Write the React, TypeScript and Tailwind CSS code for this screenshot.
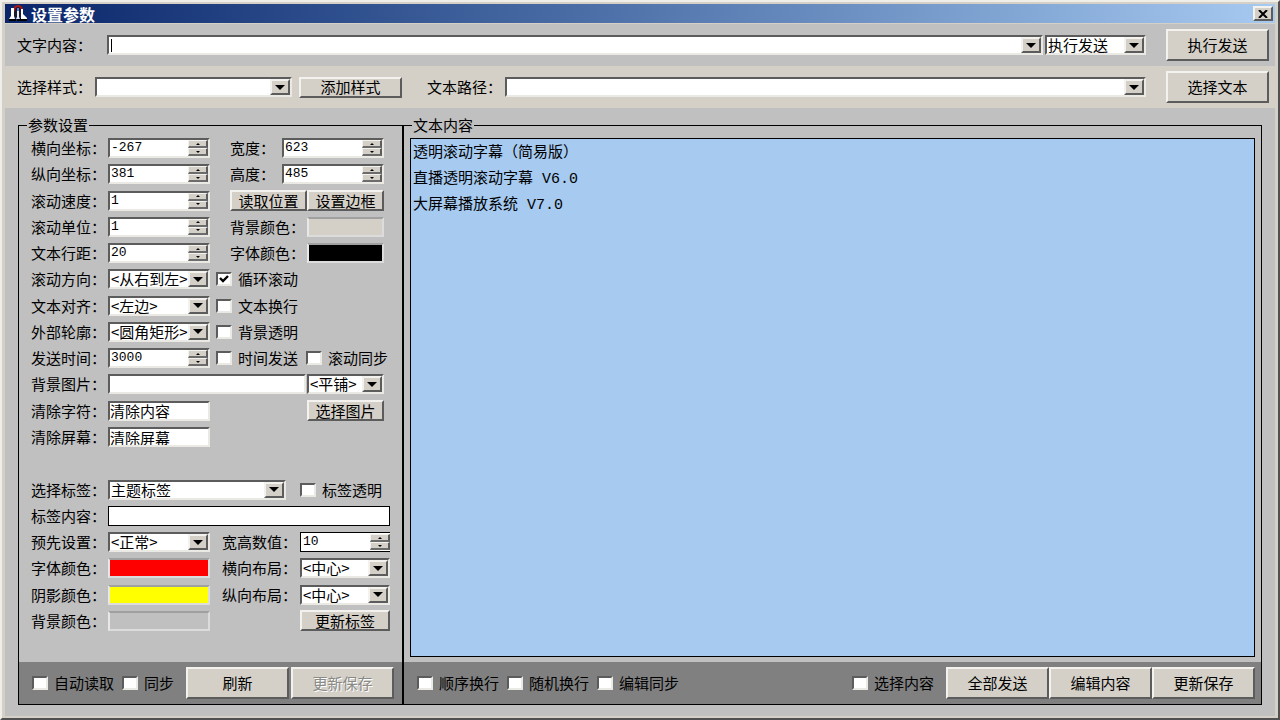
import React from "react";

const raised =
  "bg-[#d4d0c8] border-t-2 border-l-2 border-r-2 border-b-2 border-t-[#f4f2ee] border-l-[#f4f2ee] border-r-[#5c5c5c] border-b-[#5c5c5c]";
const sunken =
  "bg-white border-t-2 border-l-2 border-r-2 border-b-2 border-t-[#5c5c5c] border-l-[#5c5c5c] border-r-[#ebe9e4] border-b-[#ebe9e4]";

function Button({ children, className = "", disabled = false }: { children: React.ReactNode; className?: string; disabled?: boolean }) {
  return (
    <button
      type="button"
      disabled={disabled}
      className={`${raised} flex shrink-0 items-center justify-center whitespace-nowrap text-black disabled:text-[#8a8a86] disabled:[text-shadow:1px_1px_0_#fff] ${className}`}
    >
      {children}
    </button>
  );
}

function DownArrow() {
  return (
    <svg viewBox="0 0 10 5" className="h-[5px] w-[10px]" aria-hidden="true">
      <path d="M0 0H10L5 5Z" fill="#000" />
    </svg>
  );
}

function Select({ id, label, options, className = "" }: { id: string; label?: string; options: string[]; className?: string }) {
  return (
    <span className={`${sunken} grid h-5 grid-cols-[minmax(0,1fr)_20px] overflow-hidden ${className}`}>
      <select
        id={id}
        aria-label={label}
        className="col-span-2 col-start-1 row-start-1 h-4 w-full appearance-none overflow-hidden bg-white pl-px pr-5 leading-4 outline-none"
      >
        {options.map((o) => (
          <option key={o}>{o}</option>
        ))}
      </select>
      <span className={`${raised} pointer-events-none col-start-2 row-start-1 flex h-4 items-center justify-center`}>
        <DownArrow />
      </span>
    </span>
  );
}

function StepButton({ up = false }: { up?: boolean }) {
  return (
    <button
      type="button"
      aria-label={up ? "增加" : "减少"}
      className="flex h-2 w-full items-center justify-center border-b-2 border-l border-r-2 border-t border-b-[#6c6c6c] border-l-[#f4f2ee] border-r-[#5c5c5c] border-t-[#f4f2ee] bg-[#d4d0c8]"
    >
      <svg viewBox="0 0 4 2" className="h-0.5 w-1" aria-hidden="true">
        <path d={up ? "M0 2H4L2 0Z" : "M0 0H4L2 2Z"} fill="#000" />
      </svg>
    </button>
  );
}

function Spinner({ id, value, className = "", flat = false }: { id: string; value: string; className?: string; flat?: boolean }) {
  return (
    <span className={`flex h-5 items-center overflow-hidden ${flat ? "border border-r-0 border-black bg-white pl-px" : sunken} ${className}`}>
      <input
        id={id}
        defaultValue={value}
        className="h-4 w-0 min-w-0 flex-1 bg-white pl-px font-['Liberation_Mono',monospace] text-[13px] leading-4 outline-none"
      />
      <span className="flex w-5 shrink-0 flex-col">
        <StepButton up />
        <StepButton />
      </span>
    </span>
  );
}

function Check({ label, checked = false, className = "" }: { label: string; checked?: boolean; className?: string }) {
  return (
    <label className={`flex items-center gap-1.5 whitespace-nowrap ${className}`}>
      <span className="grid">
        <input type="checkbox" defaultChecked={checked} className={`${sunken} peer col-start-1 row-start-1 h-[14px] w-4 appearance-none`} />
        <svg viewBox="0 0 16 14" className="pointer-events-none col-start-1 row-start-1 hidden h-[14px] w-4 peer-checked:block" aria-hidden="true">
          <path d="M4 6L7 9L12 4" fill="none" stroke="#000" strokeWidth="2.4" />
        </svg>
      </span>
      {label}
    </label>
  );
}

function Field({ id, label, children }: { id: string; label: string; children: React.ReactNode }) {
  return (
    <>
      <label htmlFor={id} className="w-[77px] shrink-0 whitespace-nowrap">
        {label}
      </label>
      {children}
    </>
  );
}

function Row({ children }: { children?: React.ReactNode }) {
  return <div className="flex min-h-6 items-center">{children}</div>;
}

function Swatch({ id, className }: { id: string; className: string }) {
  return <button id={id} type="button" className={`h-5 border-2 border-b-[#dcdcdc] border-l-[#e8e8e8] border-r-[#dcdcdc] border-t-[#a0a0a0] ${className}`} />;
}

export default function App() {
  return (
    <div className="flex min-h-screen flex-col border-2 border-b-[#505050] border-l-[#f0eee9] border-r-[#505050] border-t-[#f0eee9] bg-[#d4d0c8] p-[3px] pb-0.5 pt-0.5 font-['Noto_Sans_CJK_SC',sans-serif] text-[15px] leading-4 text-black">
      <header className="flex h-[19px] shrink-0 items-center bg-linear-to-r from-[#0a246a] to-[#a6caf0] pl-1 pr-0.5 text-white">
        <svg viewBox="0 0 18 17" className="mr-1 h-[17px] w-[18px]" aria-hidden="true">
          <path d="M0 14H7V16H0ZM8 13H18V16H8Z" fill="#000" />
          <path d="M5 7Q5 2 9 2T13 7V12H5Z" fill="#1a1a2a" />
          <path d="M5 6Q5 1 9 1T13 6" fill="none" stroke="#a81818" strokeWidth="2" />
          <path d="M2 3H5V11L6 14H0L2 11Z" fill="#fff" />
          <path d="M8 4H10V12L11 14H7L8 12Z" fill="#e8ecff" />
          <path d="M8 3H10V6H8Z" fill="#5080e0" />
          <path d="M12 4H14V9L18 13V14H12Z" fill="#fff" />
        </svg>
        <h1 className="text-base font-bold leading-4">设置参数</h1>
        <button type="button" aria-label="关闭" className={`${raised} ml-auto flex h-[15px] w-5 items-center justify-center`}>
          <svg viewBox="0 0 10 8" className="h-2 w-[10px]" aria-hidden="true">
            <path d="M1 0L9 8M9 0L1 8" stroke="#000" strokeWidth="2" />
          </svg>
        </button>
      </header>

      <div className="mt-px flex h-[42px] shrink-0 items-center bg-[#c0c0c0] pl-3 pr-1.5">
        <label htmlFor="content" className="w-[90px] shrink-0">文字内容：</label>
        <span className={`${sunken} grid h-5 flex-1 grid-cols-[minmax(0,1fr)_20px] items-center`}>
          <input id="content" className="col-span-2 col-start-1 row-start-1 h-4 w-full bg-white pl-0.5 pr-5 caret-transparent outline-none" />
          <span className="pointer-events-none col-start-1 row-start-1 ml-0.5 h-[13px] w-px bg-black" />
          <button type="button" aria-label="历史内容" className={`${raised} col-start-2 row-start-1 flex h-4 items-center justify-center`}>
            <DownArrow />
          </button>
        </span>
        <Select id="mode" label="执行方式" options={["执行发送"]} className="ml-0.5 w-[101px]" />
        <Button className="ml-5 h-8 w-[103px]">执行发送</Button>
      </div>

      <div className="flex h-[42px] shrink-0 items-center pl-3 pr-1.5">
        <label htmlFor="style" className="w-[78px] shrink-0">选择样式：</label>
        <Select id="style" options={[""]} className="w-[197px]" />
        <Button className="ml-[7px] h-[21px] w-[103px]">添加样式</Button>
        <label htmlFor="path" className="ml-[25px] w-[78px] shrink-0">文本路径：</label>
        <Select id="path" options={[""]} className="flex-1" />
        <Button className="ml-5 h-8 w-[103px]">选择文本</Button>
      </div>

      <main className="flex flex-1 bg-[#c0c0c0] px-[13px] pb-[11px] pt-[9px]">
        <fieldset className="flex w-[385px] shrink-0 flex-col border border-r-2 border-black">
          <legend className="ml-2 h-4 px-px">参数设置</legend>
          <div className="flex h-full flex-col">
            <div className="grid flex-1 auto-rows-fr px-3 pb-7 pt-0.5">
              <Row>
                <Field id="x" label="横向坐标："><Spinner id="x" value="-267" className="w-[102px]" /></Field>
                <label htmlFor="w" className="ml-5 w-[52px]">宽度：</label>
                <Spinner id="w" value="623" className="w-[102px]" />
              </Row>
              <Row>
                <Field id="y" label="纵向坐标："><Spinner id="y" value="381" className="w-[102px]" /></Field>
                <label htmlFor="h" className="ml-5 w-[52px]">高度：</label>
                <Spinner id="h" value="485" className="w-[102px]" />
              </Row>
              <Row>
                <Field id="speed" label="滚动速度："><Spinner id="speed" value="1" className="w-[102px]" /></Field>
                <Button className="ml-5 h-[21px] w-[77px]">读取位置</Button>
                <Button className="h-[21px] w-[77px]">设置边框</Button>
              </Row>
              <Row>
                <Field id="unit" label="滚动单位："><Spinner id="unit" value="1" className="w-[102px]" /></Field>
                <label htmlFor="bg" className="ml-5 w-[77px]">背景颜色：</label>
                <Swatch id="bg" className="w-[77px] bg-[#d4d0c8]" />
              </Row>
              <Row>
                <Field id="gap" label="文本行距："><Spinner id="gap" value="20" className="w-[102px]" /></Field>
                <label htmlFor="fg" className="ml-5 w-[77px]">字体颜色：</label>
                <Swatch id="fg" className="w-[77px] bg-black" />
              </Row>
              <Row>
                <Field id="dir" label="滚动方向："><Select id="dir" options={["<从右到左>"]} className="w-[102px]" /></Field>
                <Check label="循环滚动" checked className="ml-1.5" />
              </Row>
              <Row>
                <Field id="align" label="文本对齐："><Select id="align" options={["<左边>"]} className="w-[102px]" /></Field>
                <Check label="文本换行" className="ml-1.5" />
              </Row>
              <Row>
                <Field id="outline" label="外部轮廓："><Select id="outline" options={["<圆角矩形>"]} className="w-[102px]" /></Field>
                <Check label="背景透明" className="ml-1.5" />
              </Row>
              <Row>
                <Field id="time" label="发送时间："><Spinner id="time" value="3000" className="w-[102px]" /></Field>
                <Check label="时间发送" className="ml-1.5" />
                <Check label="滚动同步" className="ml-2" />
              </Row>
              <Row>
                <Field id="pic" label="背景图片："><input id="pic" className={`${sunken} h-5 w-[198px] outline-none`} /></Field>
                <Select id="tile" label="图片排列" options={["<平铺>"]} className="ml-px w-[77px]" />
              </Row>
              <Row>
                <Field id="cc" label="清除字符："><input id="cc" defaultValue="清除内容" className={`${sunken} h-5 w-[102px] leading-4 outline-none`} /></Field>
                <Button className="ml-[97px] h-[21px] w-[77px]">选择图片</Button>
              </Row>
              <Row>
                <Field id="cs" label="清除屏幕："><input id="cs" defaultValue="清除屏幕" className={`${sunken} h-5 w-[102px] leading-4 outline-none`} /></Field>
              </Row>
              <Row />
              <Row>
                <Field id="tagsel" label="选择标签："><Select id="tagsel" options={["主题标签"]} className="w-[178px]" /></Field>
                <Check label="标签透明" className="ml-[14px]" />
              </Row>
              <Row>
                <Field id="tag" label="标签内容："><input id="tag" className="h-5 w-[282px] border border-black bg-white outline-none" /></Field>
              </Row>
              <Row>
                <Field id="preset" label="预先设置："><Select id="preset" options={["<正常>"]} className="w-[102px]" /></Field>
                <label htmlFor="size" className="ml-3 w-[78px]">宽高数值：</label>
                <Spinner id="size" value="10" flat className="w-[90px]" />
              </Row>
              <Row>
                <Field id="tagfg" label="字体颜色："><Swatch id="tagfg" className="w-[102px] bg-[#ff0000]" /></Field>
                <label htmlFor="hlay" className="ml-3 w-[78px]">横向布局：</label>
                <Select id="hlay" options={["<中心>"]} className="w-[90px]" />
              </Row>
              <Row>
                <Field id="shadow" label="阴影颜色："><Swatch id="shadow" className="w-[102px] bg-[#ffff00]" /></Field>
                <label htmlFor="vlay" className="ml-3 w-[78px]">纵向布局：</label>
                <Select id="vlay" options={["<中心>"]} className="w-[90px]" />
              </Row>
              <Row>
                <Field id="tagbg" label="背景颜色："><Swatch id="tagbg" className="w-[102px] bg-[#c0c0c0]" /></Field>
                <Button className="ml-[90px] h-[21px] w-[90px]">更新标签</Button>
              </Row>
            </div>
            <div className="flex h-[42px] shrink-0 items-center bg-[#808080] pl-[13px] pr-2">
              <Check label="自动读取" />
              <Check label="同步" className="ml-2" />
              <Button className="ml-auto h-8 w-[103px]">刷新</Button>
              <Button className="ml-0.5 h-8 w-[103px]" disabled>更新保存</Button>
            </div>
          </div>
        </fieldset>

        <fieldset className="flex min-w-0 flex-1 flex-col border border-l-0 border-black">
          <legend className="ml-2 h-4 px-px">文本内容</legend>
          <div className="flex h-full flex-col">
            <textarea
              aria-label="文本内容"
              defaultValue={"透明滚动字幕（简易版）\n直播透明滚动字幕 V6.0\n大屏幕播放系统 V7.0"}
              className="mx-1.5 my-[5px] flex-1 resize-none border border-black bg-[#a6caf0] px-0.5 pt-0.5 font-['Liberation_Mono','Noto_Sans_CJK_SC',monospace] leading-[26px] outline-none"
            />
            <div className="flex h-[42px] shrink-0 items-center bg-[#808080] pl-[13px] pr-1.5">
              <Check label="顺序换行" />
              <Check label="随机换行" className="ml-2" />
              <Check label="编辑同步" className="ml-2" />
              <Check label="选择内容" className="ml-auto mr-3" />
              <Button className="h-8 w-[103px]">全部发送</Button>
              <Button className="h-8 w-[103px]">编辑内容</Button>
              <Button className="h-8 w-[103px]">更新保存</Button>
            </div>
          </div>
        </fieldset>
      </main>
    </div>
  );
}
